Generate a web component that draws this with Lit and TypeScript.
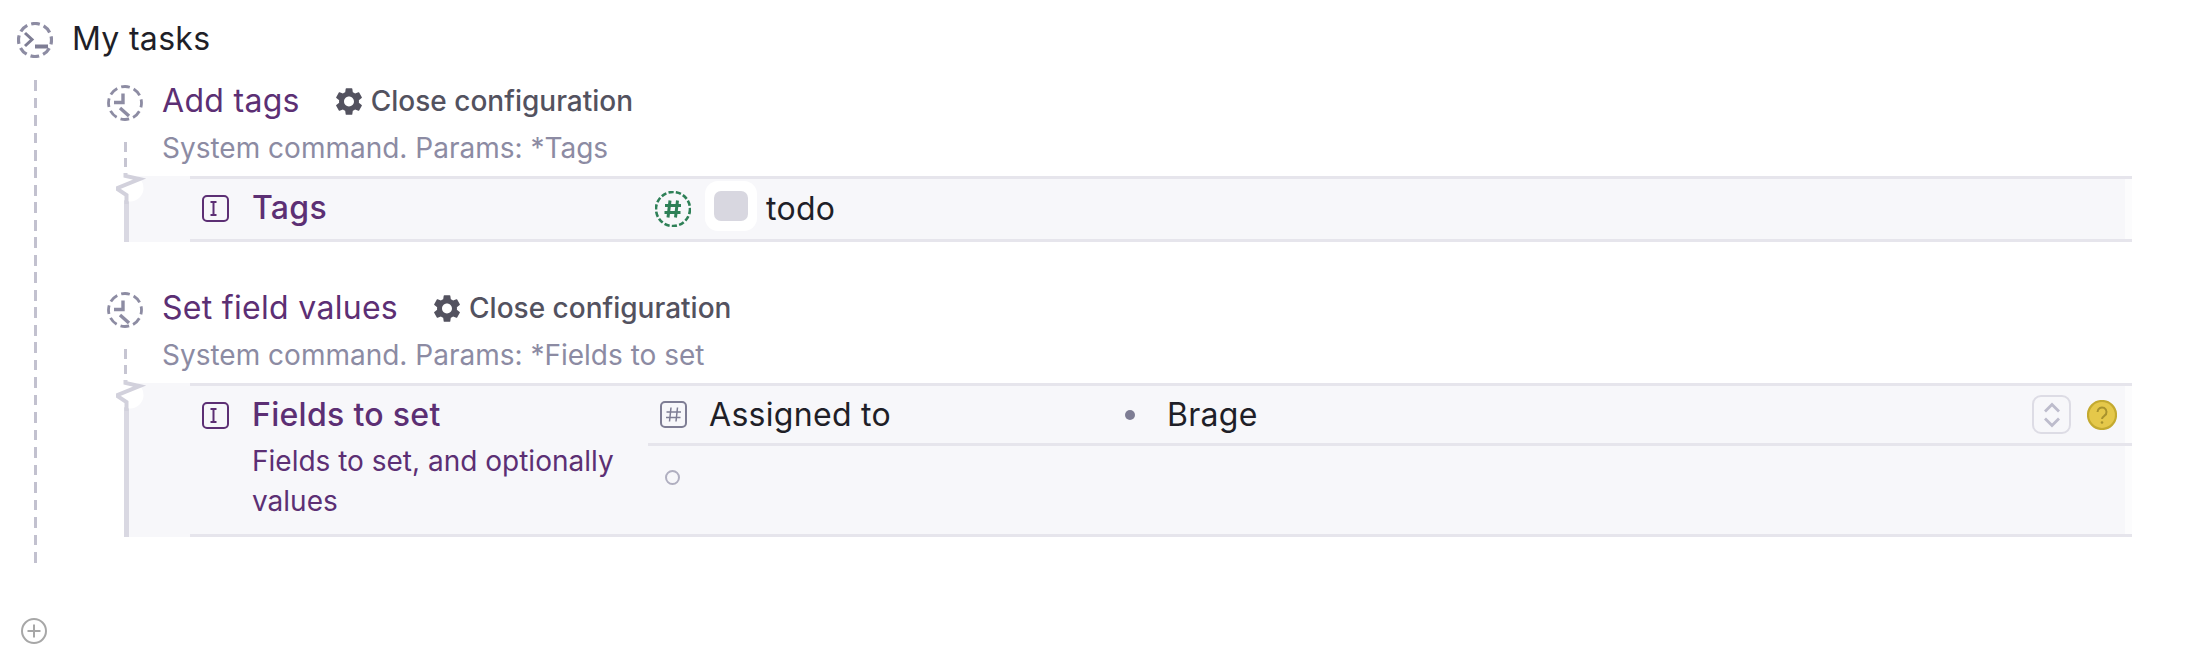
import { LitElement, html, css, svg } from "lit";
import { customElement } from "lit/decorators.js";

const dashed = (r: number, color: string, w = 3) => {
  const period = (2 * Math.PI * r) / 8;
  const dash = period * 0.68;
  return svg`<circle cx="18" cy="18" r=${r} fill="none" stroke=${color} stroke-width=${w}
    stroke-dasharray="${dash} ${period - dash}" stroke-dashoffset=${dash / 2} />`;
};

const terminalIcon = html`<svg class="ic36 term" viewBox="0 0 36 36">
  ${dashed(16.5, "#8d8ca3", 3.2)}
  <path d="M8 11l7 6.500-7 6.500" fill="none" stroke="#7e7d94" stroke-width="3"/>
  <path d="M18 24.500h13" stroke="#7e7d94" stroke-width="4"/>
</svg>`;

const commandIcon = html`<svg class="ic36 cmd" viewBox="0 0 36 36">
  ${dashed(16.5, "#8d8ca3", 2.8)}
  <path d="M16 8.500v9H7" fill="none" stroke="#8d8ca3" stroke-width="3.400"/>
  <path d="M13 23l9 8" stroke="#8d8ca3" stroke-width="3.400"/>
</svg>`;

const gear = html`<svg class="gear" viewBox="2.600 2.300 18.800 19.400"><path fill="#53525f" d="M19.140 12.940c.04-.3.06-.61.06-.94 0-.32-.02-.64-.07-.94l2.030-1.580a.49.49 0 0 0 .12-.61l-1.920-3.320a.488.488 0 0 0-.59-.22l-2.390.96c-.5-.38-1.030-.7-1.620-.94l-.36-2.540a.484.484 0 0 0-.48-.41h-3.840c-.24 0-.43.17-.47.41l-.36 2.540c-.59.24-1.130.57-1.620.94l-2.390-.96c-.22-.08-.47 0-.59.22L2.740 8.870c-.12.21-.08.47.12.61l2.030 1.580c-.05.3-.09.63-.09.94s.02.64.07.94l-2.030 1.580a.49.49 0 0 0-.12.61l1.920 3.320c.12.22.37.29.59.22l2.390-.96c.5.38 1.030.7 1.620.94l.36 2.540c.05.24.24.41.48.41h3.840c.24 0 .44-.17.47-.41l.36-2.540c.59-.24 1.130-.56 1.620-.94l2.390.96c.22.08.47 0 .59-.22l1.920-3.320c.12-.22.07-.47-.12-.61l-2.010-1.580zM12 15.600c-1.980 0-3.600-1.620-3.600-3.600s1.620-3.600 3.600-3.600 3.600 1.620 3.600 3.600-1.620 3.600-3.600 3.600z"/></svg>`;

const textIcon = html`<svg class="box" viewBox="0 0 27 27">
  <rect x="1" y="1" width="25" height="25" rx="4" fill="none" stroke="#5c2f74" stroke-width="2"/>
  <path d="M8.500 7h6M8.500 20h6M11.500 7v13" fill="none" stroke="#5c2f74" stroke-width="2"/>
</svg>`;

const hashBox = html`<svg class="box" viewBox="0 0 27 27">
  <rect x="1" y="1" width="25" height="25" rx="4" fill="none" stroke="#7e7d94" stroke-width="2"/>
  <path d="M11 6.500l-1.500 14M17.500 6.500l-1.500 14M6.500 11h14.500M6 16.500h14.500" fill="none" stroke="#7e7d94" stroke-width="1.500"/>
</svg>`;

const greenHash = html`<svg class="ic36" viewBox="0 0 36 36">
  <circle cx="18" cy="18" r="17" fill="none" stroke="#2e8057" stroke-width="2.600" stroke-dasharray="5.300 2.200"/>
  <path d="M15 9.500l-2 17M22.500 9.500l-2 17M10 14.500h16M9.500 21.500h16" fill="none" stroke="#2e8057" stroke-width="3"/>
</svg>`;

const connector = html`<svg class="conn" width="40" height="66" viewBox="0 0 40 66">
  <circle cx="14" cy="48" r="13.500" fill="#fff"/>
  <path d="M9.500 2v10M9.500 18v9" fill="none" stroke="#c6c5d2" stroke-width="3"/>
  <path d="M9.500 33v3l14 3-23 9.500 10 6.500v9" fill="none" stroke="#d2d1dc" stroke-width="4"/>
</svg>`;

@customElement("app-root")
export class AppRoot extends LitElement {
  static styles = css`
    :host {
      display: block;
      width: 2194px;
      height: 652px;
      background: #fff;
      font-family: Inter, "Liberation Sans", sans-serif;
      color: #1f1f28;
      overflow: hidden;
    }
    svg { display: block; flex: none; }
    .ic36 { width: 36px; height: 36px; }
    .term { margin-top: 4px; }
    .cmd { margin-top: 3px; }
    .box { width: 27px; height: 27px; }
    .gear { width: 26px; height: 27px; }
    .head {
      display: flex; align-items: center; gap: 19px;
      height: 40px; padding: 18px 0 0 17px;
      font-size: 32px; letter-spacing: .3px;
    }
    .tree { display: flex; margin-top: 22px; }
    .rail {
      flex: none; width: 3px; height: 483px; margin-left: 34px;
      background: repeating-linear-gradient(to bottom, #c2c1cf 0 10.500px, transparent 10.500px 17.500px);
    }
    .commands { flex: none; width: 2025px; margin-left: 70px; display: flex; flex-direction: column; gap: 45px; }
    .command { position: relative; }
    .title {
      display: flex; align-items: center; height: 42px;
      font-size: 32px; letter-spacing: .3px; color: #5c2f74;
    }
    .title .ic36 { margin-right: 19px; }
    .title .name { padding-bottom: 2px; }
    .cfg {
      display: flex; align-items: center; gap: 9px; letter-spacing: 0;
      margin-left: 36px; font-size: 28px; font-weight: 500; color: #53525f;
    }
    .desc {
      height: 52px; padding: 0 0 2px 55px; display: flex; align-items: center;
      font-size: 28px; color: #8c8ba3;
    }
    .row {
      display: flex; margin-left: 17px;
      background: #f7f7fa; border-left: 5px solid #d9d8e2;
    }
    .gutter { flex: none; width: 61px; }
    .main {
      flex: 1; display: flex;
      border-top: 3px solid #e6e5ec; border-bottom: 3px solid #e6e5ec;
      background: linear-gradient(to left, #fcfcfd 7px, #f7f7fa 7px);
    }
    .label { flex: none; width: 446px; padding-left: 12px; color: #5c2f74; }
    .label .top { display: flex; align-items: center; gap: 23px; height: 58px; font-size: 32px; letter-spacing: .3px; font-weight: 500; }
    .label .top span { padding-bottom: 2px; }
    .label .sub { margin: -3px 0 0 50px; width: 385px; font-size: 28px; line-height: 40px; padding-bottom: 13px; }
    .values { flex: 1; display: flex; flex-direction: column; }
    .vrow { display: flex; align-items: center; height: 57px; padding-left: 7px; font-size: 32px; letter-spacing: .3px; }
    .vrow.tags { height: 60px; padding-left: 7px; }
    .vrow.next { border-top: 3px solid #e6e5ec; height: 62px; padding-left: 17px; }
    .tag {
      flex: none; width: 52px; height: 50px; margin: 0 0 6px 14px; box-sizing: border-box;
      background: #fff; border-radius: 13px; display: flex; align-items: center; justify-content: center;
    }
    .tag i { display: block; width: 34px; height: 30px; border-radius: 7px; background: #d8d7e0; }
    .todo { margin-left: 9px; padding-bottom: 2px; }
    .field { width: 416px; margin-left: 22px; flex: none; }
    .vrow > .box { margin-left: 5px; }
    .dot { flex: none; width: 10px; height: 10px; border-radius: 50%; background: #7e7d94; margin-right: 32px; }
    .ring { width: 11px; height: 11px; border: 2px solid #b0afc0; border-radius: 50%; }
    .spacer { flex: 1; }
    .stepper {
      flex: none; box-sizing: border-box; width: 39px; height: 39px;
      border: 2px solid #dddce5; border-radius: 9px;
      display: flex; align-items: center; justify-content: center;
    }
    .help { margin: 0 15px 0 16px; }
    .conn { position: absolute; left: 9px; top: 60px; }
    .plus { margin: 55px 0 0 21px; }
  `;

  private command(title: string, params: string, row: unknown) {
    return html`<section class="command">
      <div class="title">
        ${commandIcon}<span class="name">${title}</span>
        <span class="cfg">${gear}Close configuration</span>
      </div>
      <div class="desc">System command. Params: *${params}</div>
      <div class="row"><div class="gutter"></div><div class="main">${row}</div></div>
      ${connector}
    </section>`;
  }

  render() {
    const tagsRow = html`
      <div class="label"><div class="top">${textIcon}<span>Tags</span></div></div>
      <div class="values">
        <div class="vrow tags">${greenHash}<span class="tag"><i></i></span><span class="todo">todo</span></div>
      </div>`;
    const fieldsRow = html`
      <div class="label">
        <div class="top">${textIcon}<span>Fields to set</span></div>
        <div class="sub">Fields to set, and optionally values</div>
      </div>
      <div class="values">
        <div class="vrow">
          ${hashBox}<span class="field">Assigned to</span>
          <span class="dot"></span><span>Brage</span><span class="spacer"></span>
          <span class="stepper"><svg width="20" height="28" viewBox="0 0 20 28">
            <path d="M3 10.500l7-7 7 7M3 17.500l7 7 7-7" fill="none" stroke="#bdbccc" stroke-width="2.800"/>
          </svg></span>
          <svg class="help" width="30" height="30" viewBox="0 0 30 30">
            <circle cx="15" cy="15" r="14" fill="#e5c84a" stroke="#c4aa30" stroke-width="2.200"/>
            <path d="M10.500 12a4.500 4.500 0 1 1 7 3.700c-1.500 1-2.500 1.600-2.500 3.300" fill="none" stroke="#a8922d" stroke-width="2"/>
            <circle cx="15" cy="22.500" r="1.300" fill="#a8922d"/>
          </svg>
        </div>
        <div class="vrow next"><span class="ring"></span></div>
      </div>`;
    return html`
      <div class="head">${terminalIcon}<span>My tasks</span></div>
      <div class="tree">
        <div class="rail"></div>
        <div class="commands">
          ${this.command("Add tags", "Tags", tagsRow)}
          ${this.command("Set field values", "Fields to set", fieldsRow)}
        </div>
      </div>
      <svg class="plus" width="26" height="26" viewBox="0 0 26 26">
        <circle cx="13" cy="13" r="12" fill="none" stroke="#a7a7a7" stroke-width="2"/>
        <path d="M13 6.500v13M6.500 13h13" stroke="#a7a7a7" stroke-width="2"/>
      </svg>
    `;
  }
}
